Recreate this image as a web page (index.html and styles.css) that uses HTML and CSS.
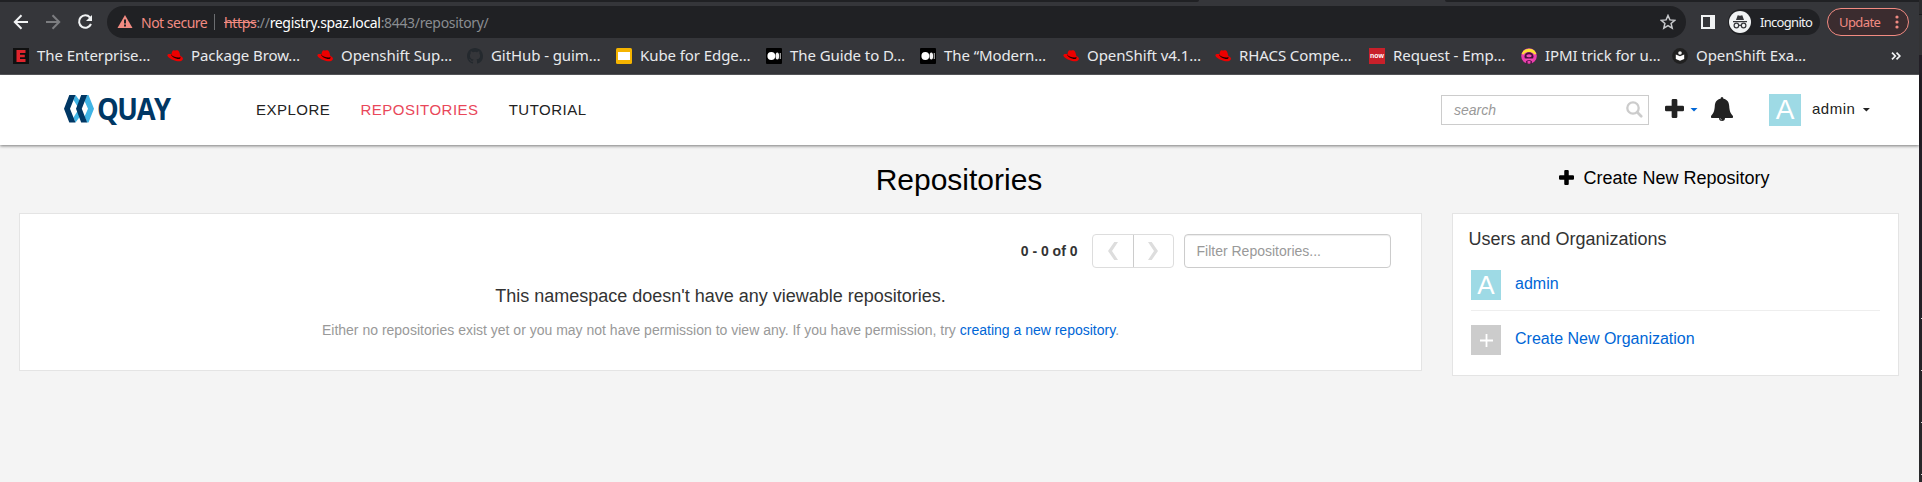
FILE: index.html
```html
<!DOCTYPE html>
<html lang="en">
<head>
<meta charset="utf-8">
<title>Repositories</title>
<link rel="stylesheet" href="styles.css">
</head>
<body>
<svg class="defs" width="0" height="0">
  <symbol id="hat" viewBox="0 0 16 16">
    <path fill="#e00" d="M4.600 5.500C5 3.400 5.600 2.100 6.700 2.200c.8.100 1.300.400 1.900.2.900-.3 1.900-.4 2.700.3 1 .9 1.500 2.700 1.900 5 1.900 1 2.900 2 2.700 3.200-.3 1.900-2.500 2.700-5.200 2.400-3.800-.5-8.300-2.600-10-5C-.1 7 .7 6.200 2.300 6.100c.8-.1 1.400 0 2.100.2z"/>
    <path fill="#200" d="M4.600 5.300c-.3.700-.4 1.200-.1 1.700 1.300 1.300 4.300 2.500 6.700 2.600 1.300.1 1.900-.3 2-1l.3 1.100c0 1.200-1.200 1.500-3.200 1.200C7.500 10.400 4.200 8.600 4.100 6.600z"/>
  </symbol>
  <symbol id="medium" viewBox="0 0 16 16">
    <rect width="16" height="16" rx="1" fill="#000"/><circle cx="5.300" cy="8" r="3.900" fill="#fff"/><ellipse cx="11.300" cy="8" rx="1.800" ry="3.500" fill="#f2f2f2"/><rect x="13.700" y="5" width="1.200" height="6" fill="#aaa"/>
  </symbol>
  <symbol id="plus" viewBox="0 0 18 18">
    <path d="M7.600 0h2.800q1.300 0 1.300 1.300V6.300h5Q18 6.300 18 7.600v2.800q0 1.300-1.300 1.300h-5v5q0 1.300-1.300 1.300H7.600q-1.300 0-1.300-1.300v-5h-5Q0 11.700 0 10.400V7.600q0-1.300 1.300-1.300h5v-5Q6.300 0 7.600 0z" fill="currentColor"/>
  </symbol>
</svg>
<div class="screen">
  <div class="window">
    <div class="tabs"><span class="tab-left"></span><span class="tab-mid"></span><span class="tab-right"></span></div>
    <div class="toolbar">
      <svg class="nav-icons" width="107" height="32" viewBox="0 0 107 32" fill="none" stroke="#f1f3f4" stroke-width="2">
        <path d="M28 16H15M21.500 9.300L14.800 16l6.700 6.700"/>
        <path stroke="#7c7d80" d="M46 16h13M52.500 9.300l6.700 6.700-6.700 6.700"/>
        <path d="M90 11.500A6.200 6.200 0 1 0 91 18"/><path d="M92 9v6h-6z" fill="#f1f3f4" stroke="none"/>
      </svg>
      <div class="omnibox">
        <svg width="16" height="14" viewBox="0 0 16 14"><path fill="#f28b82" d="M8 0l7.500 13H.5z"/><path stroke="#202124" stroke-width="2" d="M8 4.500v4M8 9.500v2"/></svg>
        <span class="warn">Not secure</span>
        <span class="divider"></span>
        <span class="url"><s>https</s>://<b>registry.spaz.local</b>:8443/repository/</span>
        <svg class="star" width="16" height="16" viewBox="0 0 16 16"><path fill="none" stroke="#c8cacd" stroke-width="1.500" d="M8 1.500l1.900 4.400 4.800.4-3.600 3.200 1.100 4.700L8 11.700l-4.200 2.500 1.100-4.700L1.300 6.300l4.800-.4z"/></svg>
      </div>
      <svg class="side" width="14" height="14" viewBox="0 0 14 14"><path fill="#f1f3f4" fill-rule="evenodd" d="M0 0h14v14H0zM2 2v10h7V2z"/></svg>
      <div class="incognito">
        <svg width="22" height="22" viewBox="0 0 22 22"><circle cx="11" cy="11" r="11" fill="#f1f3f4"/><path fill="#35363a" d="M8.700 4.300l2.300.5 2.300-.5L15 9H7zM4 10h14v1.300H4z"/><g fill="none" stroke="#35363a" stroke-width="1.200"><circle cx="7.400" cy="14.500" r="2.300"/><circle cx="14.600" cy="14.500" r="2.300"/><path d="M9.700 14.300h2.600"/></g></svg>
        <span>Incognito</span>
      </div>
      <div class="update"><span>Update</span><svg width="4" height="14" viewBox="0 0 4 14" fill="#f28b82"><circle cx="2" cy="2" r="1.600"/><circle cx="2" cy="7" r="1.600"/><circle cx="2" cy="12" r="1.600"/></svg></div>
    </div>
    <div class="bookmarks">
      <div class="bm"><svg viewBox="0 0 16 16"><rect width="16" height="16" fill="#101010"/><path fill="#e0242c" d="M3.500 2h9v3H7v1.700h4.800v2.600H7V11h5.500v3h-9z"/></svg><span>The Enterprise…</span></div>
      <div class="bm"><svg><use href="#hat"/></svg><span>Package Brow…</span></div>
      <div class="bm"><svg><use href="#hat"/></svg><span>Openshift Sup…</span></div>
      <div class="bm"><svg viewBox="0 0 16 16"><path fill="#24292e" d="M8 0C3.580 0 0 3.580 0 8c0 3.540 2.290 6.530 5.470 7.590.4.070.55-.17.55-.38 0-.19-.01-.82-.01-1.490-2.010.37-2.530-.49-2.690-.94-.09-.23-.48-.94-.82-1.130-.28-.15-.68-.52-.01-.53.63-.01 1.080.58 1.230.82.72 1.210 1.870.87 2.330.66.07-.52.28-.87.510-1.070-1.780-.2-3.640-.89-3.640-3.950 0-.87.31-1.590.82-2.150-.08-.2-.36-1.020.08-2.120 0 0 .67-.21 2.200.82a7.500 7.500 0 0 1 4 0c1.530-1.040 2.200-.82 2.200-.82.44 1.100.16 1.920.08 2.120.51.56.82 1.270.82 2.150 0 3.070-1.870 3.750-3.650 3.950.29.25.54.73.54 1.480 0 1.070-.01 1.930-.01 2.200 0 .21.15.46.55.38A8 8 0 0 0 16 8c0-4.420-3.580-8-8-8z"/></svg><span>GitHub - guim…</span></div>
      <div class="bm"><svg viewBox="0 0 16 16"><rect width="16" height="16" rx="1.500" fill="#f5b400"/><rect x="2" y="4" width="12" height="8" fill="#fff"/></svg><span>Kube for Edge…</span></div>
      <div class="bm"><svg><use href="#medium"/></svg><span>The Guide to D…</span></div>
      <div class="bm"><svg><use href="#medium"/></svg><span>The “Modern…</span></div>
      <div class="bm"><svg><use href="#hat"/></svg><span>OpenShift v4.1…</span></div>
      <div class="bm"><svg><use href="#hat"/></svg><span>RHACS Compe…</span></div>
      <div class="bm"><svg viewBox="0 0 16 16"><rect width="16" height="16" fill="#c8202a"/><text class="now" x="8" y="10.300" text-anchor="middle">now</text></svg><span>Request - Emp…</span></div>
      <div class="bm"><svg viewBox="0 0 16 16"><circle cx="8" cy="8" r="7.800" fill="#ec3fae"/><path fill="#fbe334" d="M.6 6a7.800 7.800 0 0 1 14.800 0l-2.200.5Q12 4 8 4T2.800 6.500z"/><ellipse cx="8" cy="8.500" rx="4.500" ry="4.300" fill="#45103d"/><ellipse cx="8" cy="7.800" rx="2.700" ry="1.500" fill="#f24bb4"/><path fill="#f24bb4" d="M4 10.500h8v1.500H4z"/><path fill="#45103d" d="M5.200 13h1.300v3H5.200zM9.500 13h1.300v3H9.500z"/></svg><span>IPMI trick for u…</span></div>
      <div class="bm"><svg viewBox="0 0 16 16"><circle cx="8" cy="8" r="7.900" fill="#202020"/><circle cx="8" cy="5" r="1.800" fill="#eee"/><path fill="#fff" d="M3.800 6.500L8 8.200l4.200-1.700v4.500L8 12.800 3.800 11z"/></svg><span>OpenShift Exa…</span></div>
      <svg class="more" width="10" height="8" viewBox="0 0 10 8"><path d="M1 .7L4.300 4 1 7.300M5.500.7L8.800 4 5.500 7.300" fill="none" stroke="#f1f3f4" stroke-width="1.700"/></svg>
    </div>
    <header class="header">
      <div class="logo">
        <svg width="30" height="28" viewBox="0 0 30 28"><path fill="#40b4e5" d="M11.500 0l4.500 6-2.500 5.500L9.500 5zM11.500 27.500l4.500-6-2.500-5.500-4 6.500zM23 0h1.500L30 13.700l-5.500 13.800H23l-2.500-6 3.500-7.800L20.500 6z"/><path fill="#003764" d="M5.300 0h6.200L6 13.700l5.500 13.800H5.300L0 13.700zM17.200 0h6L17.800 13.700l5.400 13.800h-6L12 13.700z"/></svg>
        <span class="logo-text">QUAY</span>
      </div>
      <nav class="nav"><a>EXPLORE</a><a class="active">REPOSITORIES</a><a>TUTORIAL</a></nav>
      <div class="search"><span>search</span><svg width="17" height="17" viewBox="0 0 17 17" fill="none" stroke="#ccc"><circle cx="7" cy="7" r="5.700" stroke-width="2.300"/><path stroke-width="2.700" stroke-linecap="round" d="M11.500 11.500l3.700 3.700"/></svg></div>
      <svg class="add" width="19" height="19"><use href="#plus"/></svg>
      <span class="caret blue"></span>
      <svg class="bell" width="22" height="24" viewBox="0 0 22 24"><path fill="#222" d="M11 0q1.400 0 1.400 1.500v.3C16.500 2.500 18 5.500 18.200 9c.3 5 1.300 7.500 3.800 10v1.200q0 .8-.8.800H14a3 3 0 0 1-6 0H.8Q0 21 0 20.200V19c2.500-2.500 3.500-5 3.800-10C4 5.500 5.500 2.500 9.600 1.800v-.3Q9.600 0 11 0z"/><path d="M9.200 21.200q.2 1.500 1.700 1.700" stroke="#ccc" stroke-width=".6" fill="none"/></svg>
      <div class="avatar big">A</div>
      <span class="user">admin</span>
      <span class="caret"></span>
    </header>
    <main class="main">
      <div class="titles"><h1>Repositories</h1><a class="create"><svg width="15" height="15"><use href="#plus"/></svg>Create New Repository</a></div>
      <div class="columns">
        <section class="panel repos">
          <div class="pager">
            <b>0 - 0 of 0</b>
            <div class="buttons">
              <span><svg width="10" height="18" viewBox="0 0 10 18"><path fill="#ddd" d="M6.300 0H10L4 9l6 9H6.300L0 9z"/></svg></span>
              <span><svg width="10" height="18" viewBox="0 0 10 18"><path fill="#ddd" d="M3.700 0H0l6 9-6 9h3.700L10 9z"/></svg></span>
            </div>
            <div class="filter">Filter Repositories...</div>
          </div>
          <p class="empty">This namespace doesn't have any viewable repositories.</p>
          <p class="hint">Either no repositories exist yet or you may not have permission to view any. If you have permission, try <a>creating a new repository</a>.</p>
        </section>
        <aside class="panel orgs">
          <h2>Users and Organizations</h2>
          <div class="org"><div class="avatar">A</div><a>admin</a></div>
          <div class="org new"><div class="avatar gray"><svg width="13" height="13" viewBox="0 0 13 13"><path d="M6.500 0v13M0 6.500h13" stroke="#fff" stroke-width="1.800"/></svg></div><a>Create New Organization</a></div>
        </aside>
      </div>
    </main>
  </div>
  <div class="edge"><i></i><i></i><i></i><i></i></div>
</div>
</body>
</html>
```
FILE: styles.css
```css
* { box-sizing: border-box; }
body { margin: 0; font-family: "Liberation Sans", Arial, sans-serif; font-size: 14px; color: #333; overflow: hidden; }
svg { display: block; flex: none; }
.defs { position: absolute; }
.screen { display: flex; width: 1922px; height: 482px; background: #f4f4f4; }
.window { width: 1919px; display: flex; flex-direction: column; }
.edge { display: flex; flex-direction: column; gap: 51px; align-items: flex-end; width: 3px; padding-top: 318px; background: linear-gradient(#2b2b2d 14px, #1c1c1e 14px 15px, #333335 15px 55px, #231f26 55px 270px, #29292b); }
.edge i { width: 1px; height: 1px; background: #ddd; }

.tabs { display: flex; height: 2px; background: #35363a; }
.tab-left { width: 1199px; background: #202124; border-bottom-right-radius: 2px; }
.tab-mid { width: 246px; }
.tab-right { flex: 1; background: #202124; border-bottom-left-radius: 2px; }
.toolbar { display: flex; align-items: center; height: 36px; padding-top: 4px; background: #35363a; font-family: "Noto Sans", sans-serif; font-size: 14px; color: #f1f3f4; }
.omnibox { display: flex; align-items: center; width: 1579px; height: 32px; padding-left: 10px; border-radius: 16px; background: #202124; white-space: nowrap; }
.warn { width: 66px; margin-left: 8px; color: #f28b82; letter-spacing: -.5px; }
.divider { width: 1px; height: 16px; margin: 0 9px 0 7px; background: #6b6d70; }
.url { color: #8a8d91; letter-spacing: -.33px; }
.url s { color: #f28b82; }
.url b { color: #fff; font-weight: 400; }
.star { margin: 0 10px 0 auto; }
.side { margin-left: 15px; }
.incognito { display: flex; align-items: center; gap: 9px; width: 92px; height: 26px; margin-left: 13px; padding-left: 1px; border-radius: 13px; background: #202124; font-size: 13px; letter-spacing: -.7px; }
.update { display: flex; align-items: center; justify-content: space-between; width: 82px; height: 28px; margin-left: 7px; padding: 0 9px 0 11px; border: 1px solid #f28b82; border-radius: 14px; background: #3b2c2f; color: #f28b82; font-size: 13px; letter-spacing: -.6px; }

.bookmarks { display: grid; grid-template-columns: 154px 150px 150px 149px 150px 154px 143px 152px 154px 152px 151px 219px auto; align-items: center; justify-content: start; height: 37px; padding: 0 0 1px 13px; border-bottom: 1px solid #5a5b5f; background: #35363a; font-family: "Noto Sans", sans-serif; font-size: 15px; color: #e8eaed; letter-spacing: -.08px; }
.bm { display: flex; align-items: center; gap: 8px; white-space: nowrap; }
.bm svg { width: 16px; height: 16px; }
.bm span { margin-bottom: 2px; }
.now { font: 700 7px "Liberation Sans", sans-serif; fill: #fff; letter-spacing: 0; }

.header { display: flex; align-items: center; height: 70px; padding-left: 64px; background: #fff; color: #222; box-shadow: 0 1px 3px rgba(0,0,0,.5); position: relative; }
.logo { display: flex; gap: 3px; width: 192px; height: 30px; }
.logo-text { color: #003764; font: 700 30px/28px "Open Sans", sans-serif; letter-spacing: -1.500px; transform: scaleX(.91); transform-origin: 0 50%; }
.nav { display: flex; gap: 30px; width: 1185px; padding-bottom: 2px; font-size: 15px; letter-spacing: .5px; }
.nav .active { color: #e9475a; }
.search { display: flex; align-items: center; justify-content: space-between; width: 208px; height: 30px; padding: 0 5px 0 12px; border: 1px solid #ccc; color: #999; font-style: italic; }
.search svg { margin-bottom: 2px; }
.add { margin: 0 0 3px 16px; }
.caret { width: 8px; height: 4px; margin: 0 0 1px 7px; background: #222; clip-path: polygon(0 0, 100% 0, 50% 100%); }
.caret.blue { margin-left: 6px; background: #0066d6; }
.bell { margin: 0 0 2px 13px; }
.avatar { display: flex; align-items: center; justify-content: center; width: 30px; height: 30px; background: #9edae5; color: #fff; font-size: 26px; line-height: 30px; }
.avatar.big { width: 32px; height: 32px; margin-left: 36px; font-size: 28px; }
.avatar.gray { background: #ccc; }
.user { margin-left: 11px; padding-bottom: 3px; font-size: 15px; letter-spacing: .5px; }

.main { flex: 1; padding: 0 20px 0 19px; }
.titles { display: flex; height: 68px; color: #000; }
.titles h1 { width: 1880px; margin: 0 -346px 0 0; padding-top: 18px; text-align: center; font-size: 30px; line-height: 34px; font-weight: 400; }
.create { display: flex; align-items: center; gap: 10px; height: 30px; margin: 18px 0 0 5.500px; font-size: 18px; white-space: nowrap; }
.create svg { margin-bottom: 2px; }
.columns { display: flex; align-items: flex-start; gap: 30px; }
.panel { background: #fff; border: 1px solid #e4e4e4; }
.repos { width: 1403px; height: 158px; padding: 20px 30px 0 18px; }
.pager { display: flex; align-items: center; justify-content: flex-end; height: 34px; }
.buttons { display: flex; width: 82px; height: 34px; margin: 0 10px 0 14.500px; border: 1px solid #ddd; border-radius: 4px; }
.buttons span { display: flex; align-items: center; justify-content: center; flex: 1; }
.buttons span + span { border-left: 1px solid #ccc; }
.filter { width: 207px; height: 34px; padding-left: 11.500px; border: 1px solid #ccc; border-radius: 4px; line-height: 32px; color: #999; box-shadow: inset 0 1px 1px rgba(0,0,0,.075); }
.empty { margin: 17px 0 0 12px; text-align: center; font-size: 18px; line-height: 22px; }
.hint { margin: 13px 0 0 12px; text-align: center; line-height: 20px; color: #999; }
.hint a, .org a { color: #0066d6; }
.orgs { width: 447px; height: 163px; padding: 15px 18px 0; }
.orgs h2 { margin: 0 0 0 -2.500px; font-size: 18px; line-height: 20px; font-weight: 400; }
.org { display: flex; gap: 14px; height: 41px; margin-top: 21px; border-bottom: 1px solid #eee; font-size: 16px; line-height: 27px; }
.org.new { margin-top: 14px; border: 0; }
```
